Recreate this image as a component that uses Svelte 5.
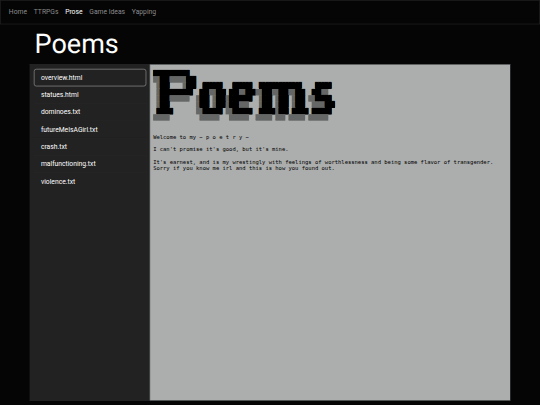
<script>
  const links = ['Home', 'TTRPGs', 'Prose', 'Game Ideas', 'Yapping'];
  const files = [
    'overview.html',
    'statues.html',
    'dominoes.txt',
    'futureMeIsAGirl.txt',
    'crash.txt',
    'malfunctioning.txt',
    'violence.txt'
  ];

  let page = $state('Prose');
  let current = $state('overview.html');

  const banner = [
    '███████████',
    '▒▒███▒▒▒▒▒███',
    ' ▒███    ▒███  ██████   ██████  █████████████    █████',
    ' ▒██████████  ███▒▒███ ███▒▒███▒▒███▒▒███▒▒███  ███▒▒',
    ' ▒███▒▒▒▒▒▒  ▒███ ▒███▒███████  ▒███ ▒███ ▒███ ▒▒█████',
    ' ▒███        ▒███ ▒███▒███▒▒▒   ▒███ ▒███ ▒███  ▒▒▒▒███',
    ' █████       ▒▒██████ ▒▒██████  █████▒███ █████ ██████',
    '▒▒▒▒▒         ▒▒▒▒▒▒   ▒▒▒▒▒▒  ▒▒▒▒▒ ▒▒▒ ▒▒▒▒▒ ▒▒▒▒▒▒'
  ];

  // split a banner line into runs of the same character
  const runs = (line) => line.match(/█+|▒+| +/g);

  const intro = [
    'Welcome to my ~ p o e t r y ~',
    '',
    "I can't promise it's good, but it's mine.",
    '',
    "It's earnest, and is my wrestingly with feelings of worthlessness and being some flavor of transgender.",
    'Sorry if you know me irl and this is how you found out.'
  ].join('\n');
</script>

<div class="window">
  <div class="page">
    <nav class="navbar">
      {#each links as link}
        <button class="nav-link" class:active={page === link} onclick={() => (page = link)}>{link}</button>
      {/each}
    </nav>

    <div class="container">
      <h1>Poems</h1>

      <main class="reader">
        <aside class="files">
          {#each files as file}
            <button class="file" class:selected={current === file} onclick={() => (current = file)}>{file}</button>
          {/each}
        </aside>
        <section class="content">
          <div class="banner">
            {#each banner as line}
              <div class="line">{#each runs(line) as run}<span class:solid={run[0] === '█'} class:shade={run[0] === '▒'}>{run}</span>{/each}</div>
            {/each}
          </div>
          <pre>{intro}</pre>
        </section>
      </main>
    </div>
  </div>
</div>

<style>
  :global(body) {
    background: #050505;
    overflow: hidden;
  }

  .window {
    width: 540px;
    height: 405px;
    overflow: hidden;
  }

  /* desktop layout at 1280x960, shrunk to fit the window */
  .page {
    width: 1280px;
    height: 960px;
    transform: scale(0.421875);
    transform-origin: 0 0;
    font-family: Roboto, sans-serif;
    font-size: 16px;
    line-height: 24px;
    color: #fff;
    text-rendering: geometricPrecision;
  }

  button {
    font: inherit;
    background: none;
    cursor: pointer;
  }

  .navbar {
    box-sizing: border-box;
    height: 58px;
    display: flex;
    align-items: center;
    padding: 0 11px;
    border: 2px solid #1d1d1d;
  }

  .nav-link {
    border: none;
    padding: 8px;
    color: #8c8c8c;
  }

  .nav-link.active {
    color: #fff;
  }

  .container {
    width: 1140px;
    margin: 0 auto;
  }

  h1 {
    margin: 0;
    padding: 8px 12px;
    height: 78px;
    font-size: 64px;
    line-height: 77px;
    font-weight: 400;
  }

  .reader {
    display: flex;
    height: 798px;
    box-sizing: border-box;
    border: 1px solid #495057;
    border-left-color: #222;
  }

  .files {
    width: 284px;
    flex: none;
    box-sizing: border-box;
    padding: 10px 8px 8px 9px;
    background: #222;
  }

  .file {
    position: relative;
    display: block;
    width: 100%;
    box-sizing: border-box;
    padding: 8px 16px;
    margin-bottom: -1px;
    border: 1px solid #272727;
    text-align: left;
    color: #fff;
  }

  .file.selected {
    z-index: 1;
    border: 2px solid #7a7a7a;
    padding: 7px 15px;
    border-radius: 6px;
  }

  .content {
    flex: 1;
    padding: 13px 7px;
    border-left: 1px solid #495057;
    background: #acaead;
    color: #000;
    font-family: 'DejaVu Sans Mono', monospace;
    font-size: 13px;
    line-height: 15px;
  }

  .line {
    display: flex;
    height: 15px;
    white-space: pre;
  }

  .solid {
    background: #000;
  }

  .shade {
    color: #656666;
    background: #656666;
  }

  pre {
    margin: 31px 0 0;
    font: inherit;
    text-rendering: auto;
  }
</style>
